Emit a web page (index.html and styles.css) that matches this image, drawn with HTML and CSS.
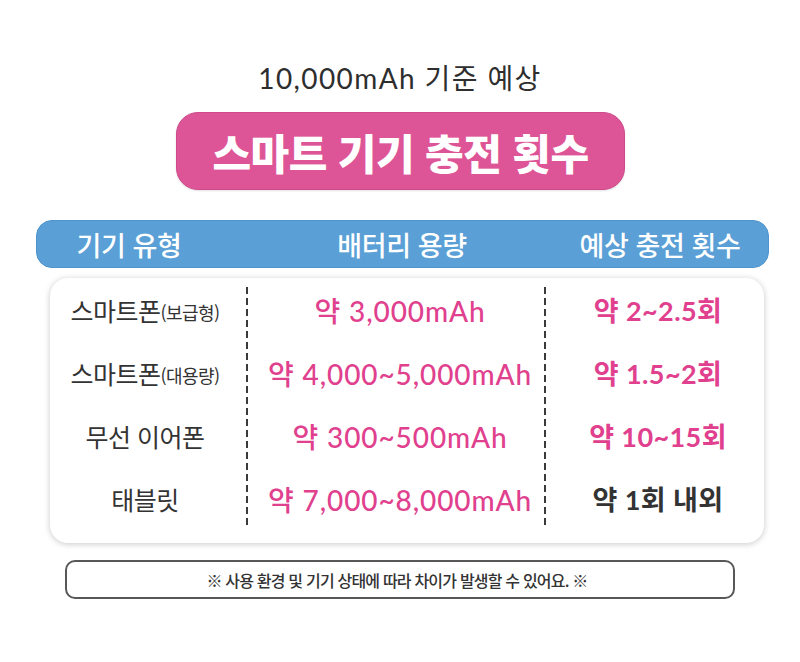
FILE: index.html
```html
<!DOCTYPE html>
<html lang="ko">
<head>
<meta charset="utf-8">
<link rel="stylesheet" href="styles.css">
</head>
<body>
<div class="page">
  <div class="subtitle">10,000mAh 기준 예상</div>
  <div class="pill">스마트 기기 충전 횟수</div>
  <div class="head">
    <div class="hcell">기기 유형</div>
    <div class="hcell">배터리 용량</div>
    <div class="hcell">예상 충전 횟수</div>
  </div>
  <div class="card">
    <div class="col col-type">
      <div class="cell">스마트폰<span class="small">(보급형)</span></div>
      <div class="cell">스마트폰<span class="small">(대용량)</span></div>
      <div class="cell">무선 이어폰</div>
      <div class="cell">태블릿</div>
    </div>
    <div class="sep"></div>
    <div class="col col-cap">
      <div class="cell pink">약 3,000mAh</div>
      <div class="cell pink">약 4,000~5,000mAh</div>
      <div class="cell pink">약 300~500mAh</div>
      <div class="cell pink">약 7,000~8,000mAh</div>
    </div>
    <div class="sep"></div>
    <div class="col col-cnt">
      <div class="cell pink">약 2~2.5회</div>
      <div class="cell pink">약 1.5~2회</div>
      <div class="cell pink">약 10~15회</div>
      <div class="cell dark">약 1회 내외</div>
    </div>
  </div>
  <div class="note">※ 사용 환경 및 기기 상태에 따라 차이가 발생할 수 있어요. ※</div>
</div>
</body>
</html>
```

FILE: styles.css
```css
html, body {
  margin: 0;
  padding: 0;
  background: #ffffff;
}
.page {
  width: 800px;
  height: 662px;
  display: flex;
  flex-direction: column;
  font-family: "Noto Sans CJK KR", "Noto Sans", sans-serif;
  color: #333333;
}
.subtitle {
  margin-top: 61px;
  height: 34px;
  line-height: 34px;
  text-align: center;
  font-family: "Lato", "Noto Sans CJK KR", sans-serif;
  font-size: 28px;
  font-weight: 400;
  color: #2e2e2e;
  letter-spacing: 1.4px;
}
.pill {
  margin-top: 17px;
  margin-left: 176px;
  width: 449px;
  height: 78px;
  box-sizing: border-box;
  border: 1px solid #cf4a8b;
  border-radius: 22px;
  background: #de5597;
  color: #ffffff;
  font-size: 42px;
  font-weight: 900;
  letter-spacing: -0.6px;
  display: flex;
  align-items: center;
  justify-content: center;
  box-shadow: 0 1px 2px rgba(0,0,0,0.12);
}
.head {
  margin-top: 30px;
  margin-left: 36px;
  width: 733px;
  height: 48px;
  box-sizing: border-box;
  padding-right: 33px;
  border-radius: 16px;
  background: #5a9fd6;
  border: 1px solid #4f94cc;
  display: grid;
  grid-template-columns: 184px 362px 154px;
  align-items: center;
  color: #ffffff;
  font-size: 27px;
  font-weight: 500;
  letter-spacing: -0.4px;
}
.hcell {
  display: flex;
  justify-content: center;
  white-space: nowrap;
}
.card {
  margin-top: 10px;
  margin-left: 50px;
  width: 714px;
  height: 265px;
  border-radius: 18px;
  background: #ffffff;
  box-shadow: 0 1px 6px rgba(0,0,0,0.22);
  display: flex;
}
.col {
  display: flex;
  flex-direction: column;
}
.col-type {
  width: 196px;
  padding-right: 6px;
  box-sizing: border-box;
}
.col-cap {
  width: 296px;
  padding-left: 8px;
  box-sizing: border-box;
}
.col-cnt {
  width: 218px;
  padding-left: 6px;
  box-sizing: border-box;
}
.cell {
  height: 63px;
  display: flex;
  align-items: center;
  justify-content: center;
  white-space: nowrap;
}
.col-type .cell {
  font-size: 25px;
  font-weight: 400;
  color: #333333;
  letter-spacing: -0.5px;
}
.small {
  font-size: 18px;
  letter-spacing: -0.6px;
  margin-top: 4px;
}
.col-cap .cell {
  font-family: "Lato", "Noto Sans CJK KR", sans-serif;
  font-size: 28px;
  font-weight: 500;
  letter-spacing: 0.9px;
}
.col-cnt .cell {
  font-family: "Lato", "Noto Sans CJK KR", sans-serif;
  font-size: 27px;
  font-weight: 700;
  letter-spacing: 0.4px;
}
.pink {
  color: #e0408d;
}
.dark {
  color: #333333;
}
.sep {
  width: 2px;
  margin-top: 9px;
  margin-bottom: 16px;
  background: repeating-linear-gradient(to bottom, #3a3a3a 0 7px, transparent 7px 11px);
}
.note {
  margin-top: 17px;
  margin-left: 65px;
  width: 670px;
  height: 39px;
  box-sizing: border-box;
  padding-right: 6px;
  border: 2px solid #585858;
  border-radius: 10px;
  display: flex;
  align-items: center;
  justify-content: center;
  font-size: 16px;
  font-weight: 500;
  color: #333333;
  letter-spacing: -0.8px;
}
```
